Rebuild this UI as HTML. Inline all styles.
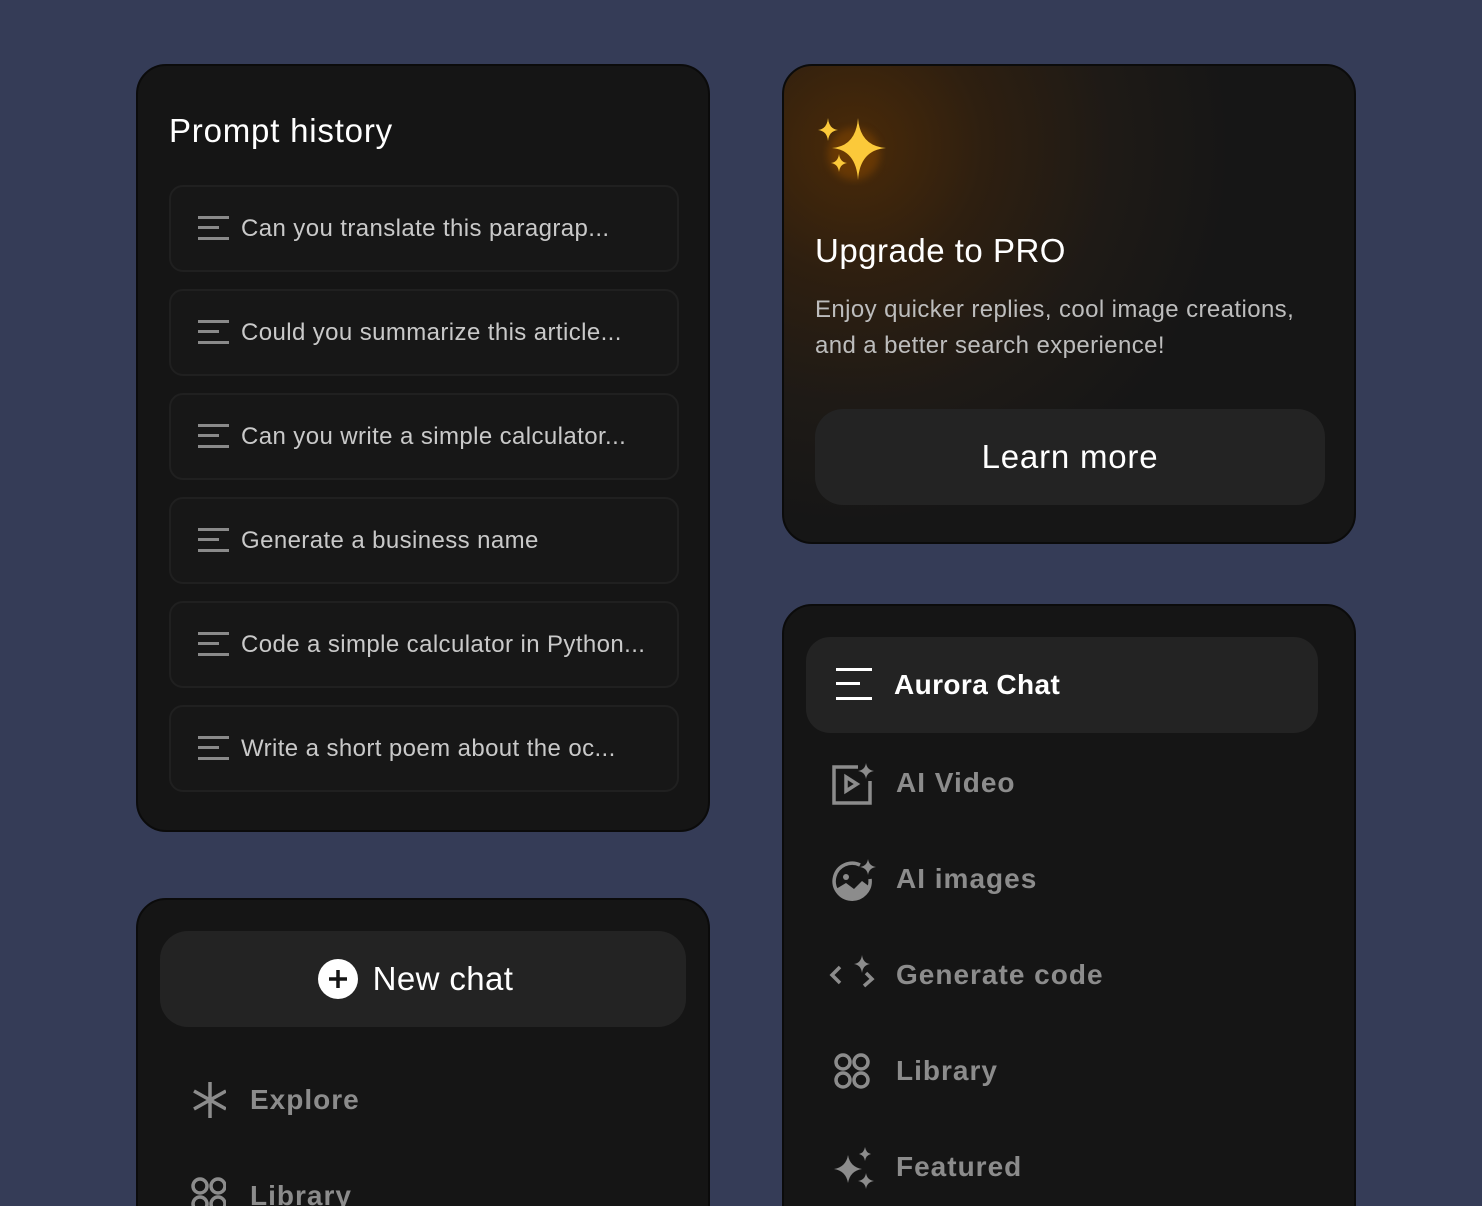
<!DOCTYPE html>
<html style="height:1206px;overflow:hidden"><head><style>
*{box-sizing:border-box;margin:0;padding:0}
body{width:1482px;height:1206px;background:#353c57;font-family:"Liberation Sans",sans-serif;position:relative;overflow:hidden;letter-spacing:0.4px}
.card{position:absolute;background:#151515;border:2px solid #0b0b0b;border-radius:30px;overflow:hidden}
.item{position:absolute;left:31px;width:510px;height:87px;border:2px solid #202020;background:#171717;border-radius:14px;color:#c9c9c9;font-size:24px;line-height:83px;padding-left:70px}
.item .ic{position:absolute;left:27px;top:29px;width:31px;height:24px}
.ic i{position:absolute;left:0;height:3px;background:#8a8a8a}
.nav{position:absolute;left:48px;font-size:28px;font-weight:bold;color:#8c8c8c;height:40px;line-height:40px;padding-left:64px;letter-spacing:1px}
.nav svg{position:absolute;left:0;top:0}
</style></head><body>

<div class="card" style="left:136px;top:64px;width:574px;height:768px">
 <div style="position:absolute;left:31px;top:46px;font-size:33px;color:#fff;letter-spacing:0.8px">Prompt history</div>
 <div class="item" style="top:119px"><span class="ic"><i style="top:0;width:31px"></i><i style="top:10px;width:21px"></i><i style="top:21px;width:31px"></i></span>Can you translate this paragrap...</div>
 <div class="item" style="top:223px"><span class="ic"><i style="top:0;width:31px"></i><i style="top:10px;width:21px"></i><i style="top:21px;width:31px"></i></span>Could you summarize this article...</div>
 <div class="item" style="top:327px"><span class="ic"><i style="top:0;width:31px"></i><i style="top:10px;width:21px"></i><i style="top:21px;width:31px"></i></span>Can you write a simple calculator...</div>
 <div class="item" style="top:431px"><span class="ic"><i style="top:0;width:31px"></i><i style="top:10px;width:21px"></i><i style="top:21px;width:31px"></i></span>Generate a business name</div>
 <div class="item" style="top:535px"><span class="ic"><i style="top:0;width:31px"></i><i style="top:10px;width:21px"></i><i style="top:21px;width:31px"></i></span>Code a simple calculator in Python...</div>
 <div class="item" style="top:639px"><span class="ic"><i style="top:0;width:31px"></i><i style="top:10px;width:21px"></i><i style="top:21px;width:31px"></i></span>Write a short poem about the oc...</div>
</div>

<div class="card" style="left:136px;top:898px;width:574px;height:340px">
 <div style="position:absolute;left:22px;top:31px;width:526px;height:96px;background:#232323;border-radius:28px;color:#fff;font-size:33px;line-height:96px;text-align:center;padding-left:40px">
  <svg style="position:absolute;left:158px;top:28px" width="40" height="40" viewBox="0 0 40 40"><circle cx="20" cy="20" r="20" fill="#fff"/><path d="M20 11v18M11 20h18" stroke="#151515" stroke-width="3.5"/></svg>New chat</div>
 <div class="nav" style="top:180px"><svg width="40" height="40" viewBox="0 0 40 40"><path d="M24 2v36M8 11l32 18M8 29l32-18" stroke="#8c8c8c" stroke-width="3.5"/></svg>Explore</div>
 <div class="nav" style="top:276px"><svg width="40" height="40" viewBox="0 0 40 40" fill="none" stroke="#8c8c8c" stroke-width="3.5"><circle cx="14" cy="10" r="7"/><circle cx="32" cy="10" r="7"/><circle cx="14" cy="28" r="7"/><circle cx="32" cy="28" r="7"/></svg>Library</div>
</div>

<div class="card" style="left:782px;top:64px;width:574px;height:480px;background:radial-gradient(circle at 70px 80px,#4a2a08 0,#2e1f10 130px,#1e1a16 260px,#161616 380px)">
 <svg style="position:absolute;left:30px;top:48px" width="80" height="80" viewBox="0 0 80 80">
  <defs><filter id="g"><feGaussianBlur stdDeviation="4"/></filter></defs>
  <circle cx="40" cy="40" r="26" fill="#8a4a05" opacity=".5" filter="url(#g)"/>
  <path d="M44 4 Q46 32 72 34 Q46 36 44 66 Q42 36 18 34 Q42 32 44 4Z" fill="#fbc93a"/>
  <path d="M14 4 Q15 15 24 16 Q15 17 14 27 Q13 17 4 16 Q13 15 14 4Z" fill="#fbc93a"/>
  <path d="M25 40 Q26 48 33 49 Q26 50 25 58 Q24 50 17 49 Q24 48 25 40Z" fill="#fbc93a"/>
 </svg>
 <div style="position:absolute;left:31px;top:166px;font-size:33px;color:#fff;letter-spacing:0.5px">Upgrade to PRO</div>
 <div style="position:absolute;left:31px;top:226px;font-size:24px;line-height:36px;color:#bdbdbd;width:500px">Enjoy quicker replies, cool image creations, and a better search experience!</div>
 <div style="position:absolute;left:31px;top:343px;width:510px;height:96px;background:#232323;border-radius:28px;color:#fff;font-size:33px;line-height:96px;text-align:center;letter-spacing:0.8px">Learn more</div>
</div>

<div class="card" style="left:782px;top:604px;width:574px;height:640px">
 <div style="position:absolute;left:22px;top:31px;width:512px;height:96px;background:#232323;border-radius:24px;color:#fff;font-size:28px;font-weight:bold;line-height:96px;padding-left:88px;letter-spacing:0.4px">
  <span style="position:absolute;left:30px;top:31px;width:36px;height:32px"><i style="position:absolute;left:0;top:0;width:36px;height:3px;background:#fff"></i><i style="position:absolute;left:0;top:14px;width:24px;height:3px;background:#fff"></i><i style="position:absolute;left:0;top:29px;width:36px;height:3px;background:#fff"></i></span>Aurora Chat</div>
 <div class="nav" style="top:157px"><svg width="42" height="42" viewBox="0 0 42 42" fill="none" stroke="#8c8c8c" stroke-width="3.5"><path d="M26 4H2v36h36V18"/><path d="M14 14v14l11-7z"/><path d="M34 0Q35 7 42 8Q35 9 34 16Q33 9 26 8Q33 7 34 0Z" fill="#8c8c8c" stroke="none"/></svg>AI Video</div>
 <div class="nav" style="top:253px"><svg width="44" height="44" viewBox="0 0 44 44" fill="none" stroke="#8c8c8c" stroke-width="3.5"><path d="M28 6A18 18 0 1 0 38 20"/><circle cx="14" cy="18" r="3" fill="#8c8c8c" stroke="none"/><path d="M4 30L14 24L22 30L30 22L38 28A18 18 0 0 1 4 30Z" fill="#8c8c8c" stroke="none"/><path d="M36 0Q37 7 44 8Q37 9 36 16Q35 9 28 8Q35 7 36 0Z" fill="#8c8c8c" stroke="none"/></svg>AI images</div>
 <div class="nav" style="top:349px"><svg width="50" height="40" viewBox="0 0 50 40" fill="none" stroke="#8c8c8c" stroke-width="3.5" style="left:-4px"><path d="M12 12L4 20L12 28"/><path d="M38 18L44 24L36 31"/><path d="M34 0Q35 8 42 9Q35 10 34 18Q33 10 26 9Q33 8 34 0Z" fill="#8c8c8c" stroke="none"/></svg>Generate code</div>
 <div class="nav" style="top:445px"><svg width="40" height="40" viewBox="0 0 40 40" fill="none" stroke="#8c8c8c" stroke-width="3.5"><circle cx="11" cy="11" r="7"/><circle cx="29" cy="11" r="7"/><circle cx="11" cy="29" r="7"/><circle cx="29" cy="29" r="7"/></svg>Library</div>
 <div class="nav" style="top:541px"><svg width="44" height="44" viewBox="0 0 44 44" fill="#8c8c8c"><path d="M16 8Q18 20 30 22Q18 24 16 36Q14 24 2 22Q14 20 16 8Z"/><path d="M33 0Q34 6 39 7Q34 8 33 14Q32 8 27 7Q32 6 33 0Z"/><path d="M34 26Q35 33 42 34Q35 35 34 42Q33 35 26 34Q33 33 34 26Z"/></svg>Featured</div>
</div>
</body></html>
